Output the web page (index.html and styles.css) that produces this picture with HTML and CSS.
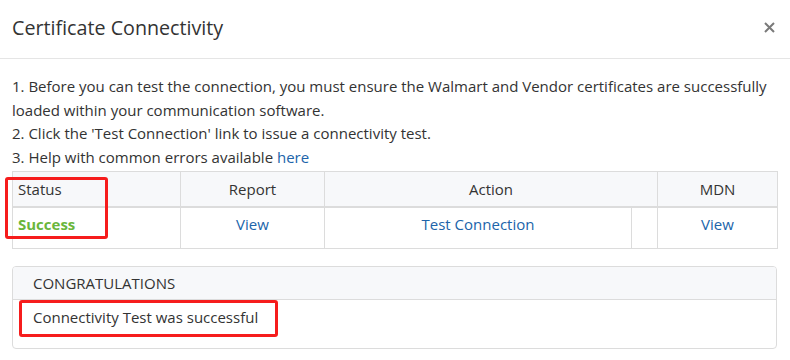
FILE: index.html
```html
<!DOCTYPE html>
<html lang="en">
<head>
<meta charset="utf-8">
<title>Certificate Connectivity</title>
<link rel="stylesheet" href="styles.css">
</head>
<body>
<div class="modal">
  <div class="modal-header">
    <h4 class="modal-title">Certificate Connectivity</h4>
    <button class="close" type="button" aria-label="Close">
      <svg width="11" height="11" viewBox="0 0 11 11"><path d="M1 1L10 10M10 1L1 10" stroke="#7a7a7a" stroke-width="2" fill="none"/></svg>
    </button>
  </div>
  <div class="modal-body">
    <p class="steps">1. Before you can test the connection, you must ensure the Walmart and Vendor certificates are successfully loaded within your communication software.<br>2. Click the 'Test Connection' link to issue a connectivity test.<br>3. Help with common errors available <a href="#">here</a></p>
    <table class="grid">
      <colgroup>
        <col class="c-status"><col class="c-report"><col class="c-action"><col class="c-empty"><col class="c-mdn">
      </colgroup>
      <thead>
        <tr><th class="left">Status</th><th>Report</th><th colspan="2">Action</th><th>MDN</th></tr>
      </thead>
      <tbody>
        <tr><td class="left"><span class="success">Success</span></td><td><a href="#">View</a></td><td><a href="#">Test Connection</a></td><td></td><td><a href="#">View</a></td></tr>
      </tbody>
    </table>
    <div class="card">
      <div class="card-header">CONGRATULATIONS</div>
      <div class="card-body">Connectivity Test was successful</div>
    </div>
  </div>
  <div class="mark mark-status"></div>
  <div class="mark mark-msg"></div>
</div>
</body>
</html>
```
FILE: styles.css
```css
html, body {
  margin: 0;
  padding: 0;
  background: #fff;
}
body {
  font-family: "Open Sans", "Noto Sans", sans-serif;
  font-size: 15px;
  color: #333;
}
.modal {
  position: relative;
  width: 790px;
  height: 360px;
  overflow: hidden;
}
.modal-header {
  height: 58px;
  border-bottom: 1px solid #e5e5e5;
  display: flex;
  align-items: center;
  justify-content: space-between;
  padding: 0 15px 0 12px;
}
.modal-title {
  margin: 0 0 3px;
  font-size: 19.7px;
  font-weight: 400;
  color: #333;
  line-height: 24px;
}
.close {
  border: 0;
  background: none;
  padding: 0;
  width: 11px;
  height: 11px;
  display: flex;
  margin-bottom: 4px;
}
.modal-body {
  padding: 16px 13px 0 12px;
}
.steps {
  margin: 0 0 2px;
  line-height: 23.5px;
}
a {
  color: #2064aa;
  text-decoration: none;
}
.grid {
  width: 765px;
  border-collapse: collapse;
  table-layout: fixed;
}
.c-status { width: 168px; }
.c-report { width: 144px; }
.c-action { width: 307px; }
.c-empty { width: 26px; }
.c-mdn { width: 120px; }
.grid th, .grid td {
  border: 1px solid #dcdcdc;
  text-align: center;
  padding: 0 5px;
  line-height: 24px;
}
.grid th {
  background: #f7f8fa;
  font-weight: 400;
  height: 33px;
  border-bottom: 2px solid #dcdcdc;
  padding-bottom: 1px;
}
.grid td {
  height: 41px;
  vertical-align: top;
  padding-top: 4px;
  padding-bottom: 0;
  box-sizing: border-box;
}
.grid .left {
  text-align: left;
}
.success {
  color: #6ab63c;
  font-weight: 700;
}
.card {
  margin-top: 17px;
  border: 1px solid #dcdcdc;
  border-radius: 4px;
  overflow: hidden;
}
.card-header {
  background: #f7f8fa;
  border-bottom: 1px solid #dcdcdc;
  height: 32px;
  line-height: 32px;
  padding: 0 20px;
}
.card-body {
  height: 48px;
  padding: 5px 20px 0;
  line-height: 24px;
  box-sizing: border-box;
}
.mark {
  position: absolute;
  border: 3px solid #f61c1c;
  border-radius: 3px;
  box-sizing: border-box;
}
.mark-status {
  left: 5px;
  top: 177px;
  width: 103px;
  height: 62px;
}
.mark-msg {
  left: 19px;
  top: 300px;
  width: 259px;
  height: 37px;
}
```
